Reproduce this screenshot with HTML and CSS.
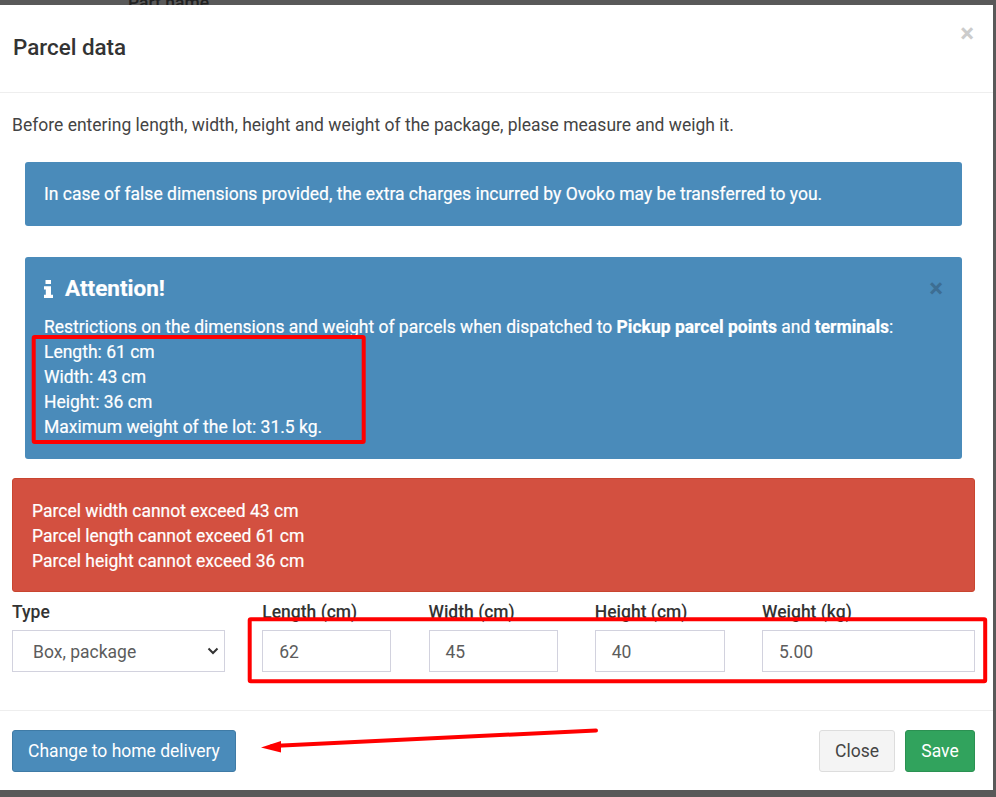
FILE: index.html
```html
<!DOCTYPE html>
<html lang="en">
<head>
<meta charset="utf-8">
<title>Parcel data</title>
<link rel="stylesheet" href="styles.css">
</head>
<body>
<div class="behind">Part name</div>
<div class="modal">
  <header class="modal-header">
    <h4 class="modal-title">Parcel data</h4>
    <span class="close-x">×</span>
  </header>
  <div class="modal-body">
    <p class="intro">Before entering length, width, height and weight of the package, please measure and weigh it.</p>
    <div class="alert alert-info alert-first">In case of false dimensions provided, the extra charges incurred by Ovoko may be transferred to you.</div>
    <div class="alert alert-info alert-attention">
      <span class="alert-x">×</span>
      <h4 class="attention-title">
        <svg class="info-icon" viewBox="0 0 9 18" width="9" height="18" aria-hidden="true"><path d="M1.500 0h5.500v4H1.500zM0 6.200h7v8.500h2V18H0v-3.300h1.800V9.500H0z" fill="#fff"/></svg>
        Attention!
      </h4>
      <div>Restrictions on the dimensions and weight of parcels when dispatched to <b>Pickup parcel points</b> and <b>terminals</b>:</div>
      <div>Length: 61 cm</div>
      <div>Width: 43 cm</div>
      <div>Height: 36 cm</div>
      <div>Maximum weight of the lot: 31.5 kg.</div>
    </div>
    <div class="alert alert-danger">
      <div>Parcel width cannot exceed 43 cm</div>
      <div>Parcel length cannot exceed 61 cm</div>
      <div>Parcel height cannot exceed 36 cm</div>
    </div>
    <div class="fields">
      <div class="field field-wide">
        <label class="field-label">Type</label>
        <div class="select-box"><span>Box, package</span>
          <svg class="chevron" viewBox="0 0 12 8" width="12" height="8" aria-hidden="true"><path d="M1.500 1.500L6 6l4.500-4.500" fill="none" stroke="#333" stroke-width="2"/></svg>
        </div>
      </div>
      <div class="field field-narrow">
        <label class="field-label">Length (cm)</label>
        <div class="input-box">62</div>
      </div>
      <div class="field field-narrow">
        <label class="field-label">Width (cm)</label>
        <div class="input-box">45</div>
      </div>
      <div class="field field-mid">
        <label class="field-label">Height (cm)</label>
        <div class="input-box">40</div>
      </div>
      <div class="field field-wide">
        <label class="field-label">Weight (kg)</label>
        <div class="input-box">5.00</div>
      </div>
    </div>
  </div>
  <footer class="modal-footer">
    <button class="btn btn-primary">Change to home delivery</button>
    <div class="footer-right">
      <button class="btn btn-default">Close</button>
      <button class="btn btn-success">Save</button>
    </div>
  </footer>
</div>
<svg class="annotations" width="996" height="797" viewBox="0 0 996 797" aria-hidden="true">
  <rect x="33.700" y="337" width="330" height="105" rx="1" fill="none" stroke="#f00" stroke-width="4"/>
  <rect x="249.700" y="619.200" width="735.500" height="62" rx="1" fill="none" stroke="#f00" stroke-width="4"/>
  <path d="M596 730.500L272 746" fill="none" stroke="#f00" stroke-width="4" stroke-linecap="round"/>
  <path d="M261 747.500L281 741L281 752.500z" fill="#f00"/>
</svg>
</body>
</html>
```
FILE: styles.css
```css
* { box-sizing: border-box; }
html, body { margin: 0; height: 797px; overflow: hidden; }
body {
  position: relative;
  background: #595959;
  font-family: Roboto, "Liberation Sans", sans-serif;
  font-size: 17.5px;
  line-height: 25px;
  color: #333;
}
.behind {
  position: absolute;
  left: 128px;
  top: -6px;
  font-weight: 500;
  color: #222;
  line-height: 19px;
}
.modal {
  position: relative;
  margin-top: 5px;
  width: 993px;
  height: 785px;
  background: #fff;
  display: flex;
  flex-direction: column;
}
.modal-header {
  height: 88px;
  flex: none;
  border-bottom: 1px solid #eee;
  padding: 29px 12px 0 13px;
  display: flex;
  justify-content: space-between;
  align-items: flex-start;
}
.modal-title {
  margin: 0;
  font-size: 22.4px;
  line-height: 26px;
  font-weight: 500;
  color: #333;
}
.close-x {
  margin: -13px 0 0 0;
  padding-right: 7px;
  font-size: 26px;
  font-weight: 700;
  line-height: 25px;
  color: #ccc;
}
.modal-body {
  flex: 1;
  padding: 0 18px 0 12px;
}
.intro { margin: 20px 0 24px; color: #444; }
.alert {
  border-radius: 3px;
  color: #fff;
  -webkit-text-stroke: 0.2px #fff;
}
.alert-info {
  background: #4a8bba;
  margin: 0 0 0 13px;
  width: 937px;
  padding: 0 19px;
}
.alert-first {
  height: 64px;
  padding-top: 20px;
  margin-bottom: 31px;
}
.alert-attention {
  position: relative;
  height: 202px;
  padding-top: 58px;
  margin-bottom: 19px;
}
.alert-x {
  position: absolute;
  right: 19px;
  top: 19px;
  font-size: 26px;
  font-weight: 700;
  line-height: 25px;
  color: #3d6e93;
  -webkit-text-stroke: 0;
}
.attention-title {
  position: absolute;
  left: 19px;
  top: 18px;
  margin: 0;
  font-size: 22.5px;
  font-weight: 700;
  line-height: 27px;
  display: flex;
  align-items: center;
  gap: 12px;
}
.info-icon { flex: none; }
.alert-danger {
  background: #d35040;
  border: 1px solid #c9452f;
  width: 963px;
  height: 114px;
  padding: 20px 19px 0;
}
.fields {
  display: flex;
  justify-content: space-between;
  width: 963px;
  margin-top: 8px;
}
.field { display: flex; flex-direction: column; }
.field-wide { width: 213px; }
.field-narrow { width: 129px; }
.field-mid { width: 130px; }
.field-label {
  font-weight: 500;
  height: 30px;
  line-height: 24px;
}
.input-box, .select-box {
  height: 42px;
  border: 1px solid #d2d2de;
  background: #fff;
  color: #5c5c5c;
  line-height: 43px;
}
.input-box { padding-left: 16px; }
.select-box {
  padding: 2px 5px 0 20px;
  display: flex;
  justify-content: space-between;
  align-items: center;
}
.chevron { flex: none; margin-top: -2px; }
.modal-footer {
  flex: none;
  height: 80px;
  border-top: 1px solid #eee;
  padding: 19px 18px 0 12px;
  display: flex;
  justify-content: space-between;
  align-items: flex-start;
}
.footer-right { display: flex; gap: 10px; }
.btn {
  height: 42px;
  border-radius: 3px;
  font-family: inherit;
  font-size: 17.5px;
  line-height: 24px;
  padding: 0 15px;
  border: 1px solid transparent;
}
.btn-primary { background: #4a8bba; border-color: #3f7ba6; color: #fff; width: 224px; padding: 0; }
.btn-default { background: #f4f4f4; border-color: #ddd; color: #444; width: 76px; padding: 0; }
.btn-success { background: #31a35d; border-color: #2b9152; color: #fff; width: 70px; padding: 0; }
.annotations { position: absolute; left: 0; top: 0; pointer-events: none; }
```
